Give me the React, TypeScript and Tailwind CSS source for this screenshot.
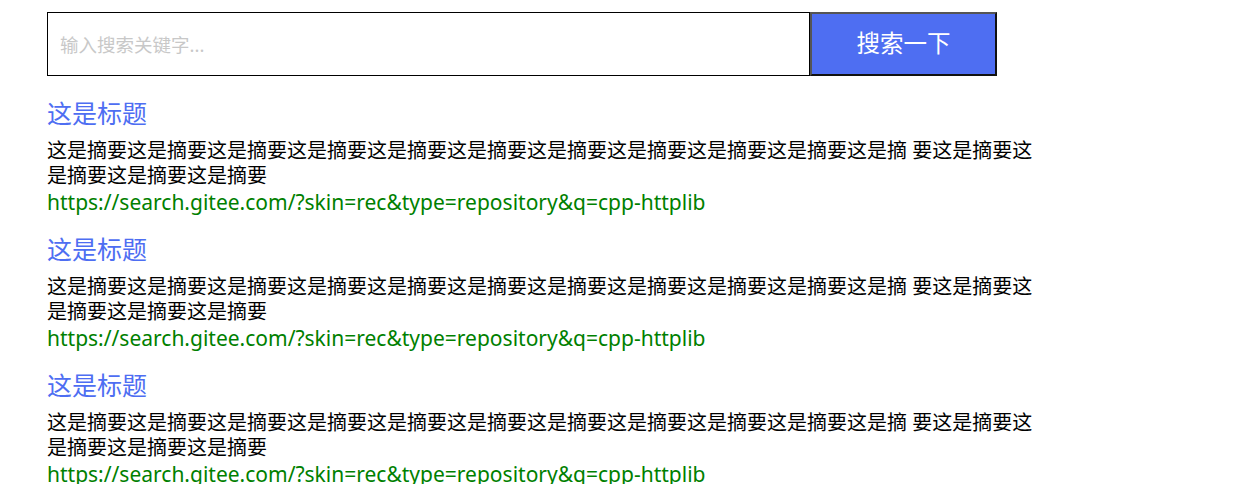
import React from 'react';

const summary =
  '这是摘要这是摘要这是摘要这是摘要这是摘要这是摘要这是摘要这是摘要这是摘要这是摘要这是摘 要这是摘要这是摘要这是摘要这是摘要';

const results = [1, 2, 3].map((i) => ({
  id: i,
  title: '这是标题',
  summary,
  url: 'https://search.gitee.com/?skin=rec&type=repository&q=cpp-httplib',
}));

export default function App() {
  return (
    <div
      className="min-h-screen bg-white"
      style={{ fontFamily: '"Noto Sans", "Noto Sans CJK SC", sans-serif' }}
    >
      <div className="ml-[47px] w-[1000px] pt-[12px]">
        {/* search bar */}
        <div className="flex h-[64px]">
          <input
            type="text"
            placeholder="输入搜索关键字..."
            className="h-[64px] w-[763px] border border-black px-[12px] text-[18.5px] text-black outline-none placeholder:text-[#c8c8c8]"
          />
          <button className="h-[64px] w-[187px] border-[2px] border-t-[#555] border-l-[#555] border-r-[#111] border-b-[#111] bg-[#4e6ef2] text-[23.5px] text-white">
            搜索一下
          </button>
        </div>

        {/* results */}
        <div className="mt-[19px] flex flex-col">
          {results.map((r) => (
            <div key={r.id} className="mb-[14px]">
              <a className="block text-[25px] leading-[36px] text-[#4e6ef2]">{r.title}</a>
              <p className="mt-[7px] w-[990px] text-[20px] leading-[25px] text-black">{r.summary}</p>
              <a className="block text-[21px] leading-[29px] text-[#008000]">{r.url}</a>
            </div>
          ))}
        </div>
      </div>
    </div>
  );
}
